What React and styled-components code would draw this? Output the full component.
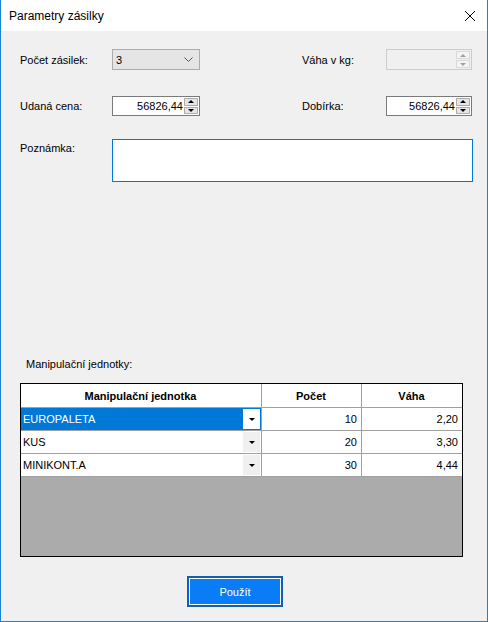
import React from 'react';
import styled, { createGlobalStyle } from 'styled-components';

const GlobalStyle = createGlobalStyle`
  html, body {
    margin: 0;
    padding: 0;
    background: #ffffff;
  }
  body {
    font-family: "Liberation Sans", Arial, sans-serif;
    font-size: 11px;
    color: #000;
  }
`;

const Window = styled.div`
  width: 488px;
  height: 622px;
  box-sizing: border-box;
  border: 1px solid #1883d7;
  border-top: none;
  display: flex;
  flex-direction: column;
  background: #f0f0f0;
`;

const TitleBar = styled.div`
  height: 31px;
  flex-shrink: 0;
  background: #ffffff;
  display: flex;
  align-items: center;
  justify-content: space-between;
  padding: 0 11px 0 8px;
  font-size: 12px;
  color: #000;
`;

const CloseIcon = styled.svg`
  width: 12px;
  height: 12px;
  margin-top: 1px;
`;

const Client = styled.div`
  flex: 1;
  display: flex;
  flex-direction: column;
  padding: 18px 14px 0 19px;
`;

const FormRow = styled.div`
  display: grid;
  grid-template-columns: 92px 88px 102px 84px 86px;
  align-items: center;
  height: ${(p) => p.h}px;
  margin-bottom: ${(p) => p.mb || 0}px;
`;

const Label = styled.span`
  white-space: nowrap;
`;

const Combo = styled.div`
  height: 21px;
  box-sizing: border-box;
  background: #e5e5e5;
  border: 1px solid #acacac;
  display: flex;
  align-items: center;
  justify-content: space-between;
  padding: 0 6px 0 3px;
`;

const Spin = styled.div`
  height: ${(p) => p.h || 20}px;
  box-sizing: border-box;
  border: 1px solid ${(p) => (p.disabled ? '#cccccc' : '#7a7a7a')};
  background: ${(p) => (p.disabled ? '#f0f0f0' : '#ffffff')};
  display: flex;
  align-items: stretch;
`;

const SpinValue = styled.div`
  flex: 1;
  text-align: right;
  line-height: 18px;
  padding-right: 1px;
`;

const SpinButtons = styled.div`
  width: 15px;
  display: flex;
  flex-direction: column;
  padding: 1px 1px 1px 0;
  gap: 1px;
  box-sizing: border-box;
`;

const SpinButton = styled.div`
  flex: 1;
  border: 1px solid ${(p) => (p.disabled ? '#d9d9d9' : '#adadad')};
  background: ${(p) => (p.disabled ? '#f4f4f4' : '#e5e5e5')};
  display: flex;
  align-items: center;
  justify-content: center;
`;

const Arrow = styled.span`
  width: 0;
  height: 0;
  border-left: 3px solid transparent;
  border-right: 3px solid transparent;
  ${(p) => (p.up ? 'border-bottom' : 'border-top')}: 3px solid ${(p) => (p.disabled ? '#a0a0a0' : '#000')};
`;

const NoteRow = styled.div`
  display: grid;
  grid-template-columns: 92px 1fr;
  margin-top: 23px;
`;

const NoteLabel = styled.span`
  padding-top: 3px;
`;

const NoteBox = styled.div`
  height: 43px;
  box-sizing: border-box;
  background: #ffffff;
  border: 1px solid #0078d7;
`;

const SectionLabel = styled.div`
  margin-top: 175px;
  padding-left: 6px;
  line-height: 14px;
`;

const GridBox = styled.div`
  margin-top: 12px;
  width: 443px;
  height: 174px;
  box-sizing: border-box;
  border: 1px solid #000;
  background: #ababab;
  display: grid;
  grid-template-columns: 241px 100px 100px;
  grid-template-rows: 24px;
  grid-auto-rows: 23px;
  align-content: start;
`;

const Cell = styled.div`
  box-sizing: border-box;
  border-right: 1px solid #a0a0a0;
  border-bottom: 1px solid #a0a0a0;
  background: ${(p) => (p.selected ? '#0078d7' : '#ffffff')};
  color: ${(p) => (p.selected ? '#ffffff' : '#000')};
  display: flex;
  align-items: center;
  justify-content: ${(p) => (p.align === 'right' ? 'flex-end' : p.align === 'center' ? 'center' : 'space-between')};
  padding: 0 ${(p) => (p.align === 'right' ? 4 : 1)}px 0 ${(p) => (p.align === 'center' ? 0 : 2)}px;
  font-weight: ${(p) => (p.head ? 700 : 400)};
  &:nth-child(3n) {
    border-right: none;
  }
`;

const CellDrop = styled.div`
  width: 17px;
  height: 20px;
  box-sizing: border-box;
  background: ${(p) => (p.selected ? '#ffffff' : '#f0f0f0')};
  display: flex;
  align-items: center;
  justify-content: center;
`;

const SmallTri = styled.span`
  width: 0;
  height: 0;
  border-left: 3px solid transparent;
  border-right: 3px solid transparent;
  border-top: 3px solid #000;
`;

const Footer = styled.div`
  display: flex;
  padding-left: 167px;
  margin-top: 19px;
`;

const ApplyButton = styled.button`
  width: 96px;
  height: 31px;
  box-sizing: border-box;
  background: #0a7cf8;
  border: 2px solid #0f5fb5;
  box-shadow: inset 0 0 0 1px #ffffff;
  color: #ffffff;
  font-family: "Liberation Sans", Arial, sans-serif;
  font-size: 11px;
  padding: 0;
`;

const units = [
  { name: 'EUROPALETA', count: '10', weight: '2,20', selected: true },
  { name: 'KUS', count: '20', weight: '3,30' },
  { name: 'MINIKONT.A', count: '30', weight: '4,44' },
];

const NumericBox = ({ value, disabled, h }) => (
  <Spin disabled={disabled} h={h}>
    <SpinValue>{value}</SpinValue>
    <SpinButtons>
      <SpinButton disabled={disabled}><Arrow up disabled={disabled} /></SpinButton>
      <SpinButton disabled={disabled}><Arrow disabled={disabled} /></SpinButton>
    </SpinButtons>
  </Spin>
);

export default function App() {
  return (
    <>
      <GlobalStyle />
      <Window>
        <TitleBar>
          <span>Parametry zásilky</span>
          <CloseIcon viewBox="0 0 12 12">
            <path d="M1 1 L11 11 M11 1 L1 11" stroke="#000" strokeWidth="1" fill="none" />
          </CloseIcon>
        </TitleBar>
        <Client>
          <FormRow h={21} mb={26}>
            <Label>Počet zásilek:</Label>
            <Combo>
              <span>3</span>
              <svg width="9" height="5" viewBox="0 0 9 5">
                <path d="M0.5 0.5 L4.5 4.5 L8.5 0.5" stroke="#555" strokeWidth="1" fill="none" />
              </svg>
            </Combo>
            <span />
            <Label>Váha v kg:</Label>
            <NumericBox value="" disabled h={21} />
          </FormRow>
          <FormRow h={20}>
            <Label>Udaná cena:</Label>
            <NumericBox value="56826,44" />
            <span />
            <Label>Dobírka:</Label>
            <NumericBox value="56826,44" />
          </FormRow>
          <NoteRow>
            <NoteLabel>Poznámka:</NoteLabel>
            <NoteBox />
          </NoteRow>
          <SectionLabel>Manipulační jednotky:</SectionLabel>
          <GridBox>
            <Cell head align="center">Manipulační jednotka</Cell>
            <Cell head align="center">Počet</Cell>
            <Cell head align="center">Váha</Cell>
            {units.map((u) => (
              <React.Fragment key={u.name}>
                <Cell selected={u.selected}>
                  <span>{u.name}</span>
                  <CellDrop selected={u.selected}><SmallTri /></CellDrop>
                </Cell>
                <Cell align="right">{u.count}</Cell>
                <Cell align="right">{u.weight}</Cell>
              </React.Fragment>
            ))}
          </GridBox>
          <Footer>
            <ApplyButton>Použít</ApplyButton>
          </Footer>
        </Client>
      </Window>
    </>
  );
}
